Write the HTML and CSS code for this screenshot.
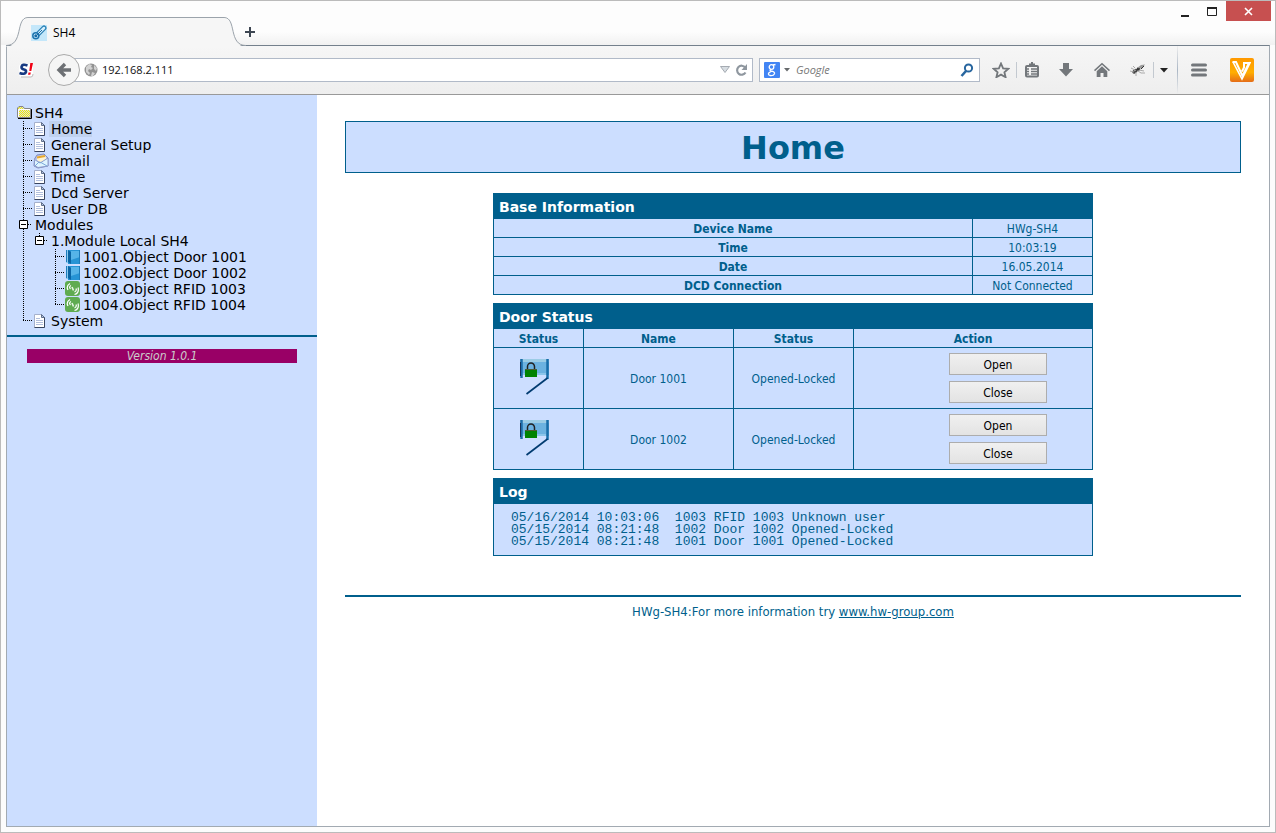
FILE: index.html
```html
<!DOCTYPE html>
<html lang="en">
<head>
<meta charset="utf-8">
<title>SH4</title>
<link rel="stylesheet" href="styles.css">
</head>
<body>
<svg class="sprites" width="0" height="0" aria-hidden="true">
  <defs><pattern id="dither" width="2" height="2" patternUnits="userSpaceOnUse"><path d="M0 0h2v2H0z" fill="#ddd"/><path d="M0 0h1v1H0zM1 1h1v1H1z" fill="#f0ec00"/></pattern></defs>
  <symbol id="tee" viewBox="0 0 16 16"><path d="M6.5 0V16M6 7.500H15" stroke="#000" stroke-dasharray="1 1" fill="none"/></symbol>
  <symbol id="end" viewBox="0 0 16 16"><path d="M6.500 0V8M6 7.500H15" stroke="#000" stroke-dasharray="1 1" fill="none"/></symbol>
  <symbol id="line" viewBox="0 0 16 16"><path d="M6.500 0V16" stroke="#000" stroke-dasharray="1 1" fill="none"/></symbol>
  <symbol id="minus" viewBox="0 0 16 16"><path d="M6.500 0V16M11 7.500H15" stroke="#000" stroke-dasharray="1 1" fill="none"/><path d="M2.500 3.500h8v8h-8z" fill="#fff" stroke="#000"/><path d="M4 7.500h5" stroke="#000"/></symbol>
  <symbol id="minus-end" viewBox="0 0 16 16"><path d="M6.500 0V4M11 7.500H15" stroke="#000" stroke-dasharray="1 1" fill="none"/><path d="M2.500 3.500h8v8h-8z" fill="#fff" stroke="#000"/><path d="M4 7.500h5" stroke="#000"/></symbol>
  <symbol id="folder" viewBox="0 0 16 16"><path d="M1 13.500h13.500V4" fill="none" stroke="#000"/><path d="M.5 12.500V3L2 1.500h4L7.500 3.500h6v9z" fill="url(#dither)" stroke="#85858b"/><path d="M1.500 12V4.500h11.500" fill="none" stroke="#fff"/></symbol>
  <symbol id="doc" viewBox="0 0 16 16"><path d="M1.500 1.500h7l3 3v10h-10z" fill="#fff" stroke="#a5b0cc"/><path d="M8.500 1.500v3h3z" fill="#b9c6e2" stroke="#60708c"/><path d="M11.500 4.500v10h-10" fill="none" stroke="#39455f"/><path d="M3 5.500h4M3 7.500h7M3 9.500h7M3 11.500h7" stroke="#b2bfdd"/></symbol>
  <symbol id="mail" viewBox="0 0 16 16"><path d="M1.500 6 4 2l7-1 4 4v8l-10 2-4-2z" fill="#b9c3ea" stroke="#8089b8"/><path d="M4 7V3.500L12 2l1.500 4.500L8 10z" fill="#fff4d0"/><path d="M4 4.500 12 3" stroke="#e6a72e" stroke-width="2"/><path d="M1.500 6.500 7 10l8-5v8L5 14.500l-3.500-2z" fill="#dff5ff" stroke="#8c9ccc"/><path d="M2 13l4-4 2 .5 6 3.500" fill="none" stroke="#78a7d8"/></symbol>
  <symbol id="door" viewBox="0 0 16 16"><path d="M1 1h3v13H1z" fill="#8cc9ee"/><path d="M3 1h12v14H3z" fill="#2694d5"/><path d="M3 1 6 3v12l-3-2z" fill="#0a65a5"/><path d="M6 2h9v6l-9 3z" fill="#56b4e8"/><path d="M1.500 1v12M14.500 1v14" stroke="#1d7dbb"/></symbol>
  <symbol id="rfid" viewBox="0 0 16 16"><rect width="15" height="15" rx="3" fill="#5fab50"/><path d="M3 9Q.8 5 5 2.500M5.500 8Q3.500 6 6 4.500M9.500 11q2.500-1 1.500-3.500M9.500 13.500Q14.500 12 13 6.500" fill="none" stroke="#fff" stroke-width="1.200"/><path d="m7 6 1.500 3.500" stroke="#e7f6e3" stroke-width="1.600"/></symbol>
  <symbol id="door-open" viewBox="0 0 32 38"><path d="M1 1h29v16H3z" fill="#6cb2e0"/><path d="M1 1h29v3H1z" fill="#9bcce5"/><path d="M3 15h24v2H3z" fill="#8bc5ea"/><path d="M2.500 1v19" stroke="#1c6da9" stroke-width="2.500"/><path d="M1.500 4v14" stroke="#17345a"/><path d="M28.500 1v20" stroke="#176ca9" stroke-width="2.500"/><path d="M28.500 20 7.500 36" stroke="#003b70" stroke-width="1.600"/><path d="M8.500 12V8.500a3.500 3.500 0 0 1 7 0V12" fill="none" stroke="#222" stroke-width="1.500"/><path d="M6 11.500h12V19H6z" fill="#008300"/><path d="M6 11.500h12" stroke="#4d5d35"/></symbol>
</svg>
<div class="window">
  <header class="titlebar">
    <div class="tab">
      <svg class="tab-edge" width="22" height="30" viewBox="0 0 22 30"><path d="M0 29.500C18 29.500 9 1.500 22 1.500V30H0z" fill="#f6f6f6"/><path d="M0 28.500C18 28.500 9 .5 22 .5" fill="none" stroke="#9ba3ab"/></svg>
      <div class="tab-body">
        <svg width="16" height="16" viewBox="0 0 16 16"><path d="M0 0h16v16H0z" fill="#c4e7fa"/><path d="m5 11 8-8" stroke="#287fb5" stroke-width="5" stroke-linecap="round"/><path d="m5 11 8-8" stroke="#d5effc" stroke-width="2.500" stroke-linecap="round"/><circle cx="4.800" cy="10.800" r="3" fill="#c4e7fa" stroke="#1d74ae" stroke-width="1.500"/><circle cx="4.800" cy="10.800" r="1.500" fill="#176aa5"/><path d="m5 11 6-6" stroke="#176aa5"/></svg>
        <span>SH4</span>
      </div>
      <svg class="tab-edge" width="22" height="30" viewBox="0 0 22 30"><path d="M22 29.500C4 29.500 13 1.500 0 1.500V30h22z" fill="#f6f6f6"/><path d="M22 28.500C4 28.500 13 .5 0 .5" fill="none" stroke="#9ba3ab"/></svg>
    </div>
    <button class="icon-button new-tab" aria-label="New tab"><svg width="12" height="12" viewBox="0 0 12 12"><path d="M6 1v10M1 6h10" stroke="#3d4652" stroke-width="2"/></svg></button>
    <div class="window-controls">
      <button class="icon-button control" aria-label="Minimize"><svg width="11" height="11" viewBox="0 0 11 11"><path d="M1 10h8" stroke="#222" stroke-width="2"/></svg></button>
      <button class="icon-button control" aria-label="Maximize"><svg width="11" height="11" viewBox="0 0 11 11"><path d="M.5 2v7.500h9V2" fill="none" stroke="#222"/><path d="M0 2h10" stroke="#222" stroke-width="2"/></svg></button>
      <button class="icon-button close" aria-label="Close"><svg width="9" height="9" viewBox="0 0 9 9"><path d="m1 1 7 7M8 1 1 8" stroke="#fff" stroke-width="1.600"/></svg></button>
    </div>
  </header>
  <div class="frame">
    <nav class="toolbar" aria-label="Browser">
      <button class="icon-button seznam" aria-label="Seznam"><svg width="16" height="16" viewBox="0 0 16 16"><rect x="1" y="2" width="14" height="13" rx="3" fill="#fff"/><path d="M3 15h10q2 0 2-3" fill="none" stroke="#bbb"/><path d="M9.500 3.500Q4 1.500 3.500 5q0 2 2.500 2.500t2 2.500Q7 13 1.500 11" fill="none" stroke="#173a82" stroke-width="2.600"/><path d="M12.300 1h2.700l-1.700 8h-2zM10.500 10.500h2.300l-.5 2.300H10z" fill="#f00014"/></svg></button>
      <button class="icon-button back" aria-label="Back"><svg width="16" height="16" viewBox="0 0 16 16"><path d="M15 8H4M9 2 3 8l6 6" fill="none" stroke="#6d7074" stroke-width="3.400"/></svg></button>
      <div class="field address">
        <svg width="14" height="14" viewBox="0 0 14 14"><circle cx="7" cy="7" r="6.500" fill="#929292"/><path d="m2 4 3-3 3 1-1 2 2 1-2 2-2-1-1 2 2 2-1 2-3-3zM10 2l3 3-1 3-2-2zM8 9l3 1-2 3H7z" fill="#d2d2d2"/></svg>
        <input class="text" aria-label="Address" value="192.168.2.111">
        <button class="icon-button mini" aria-label="History"><svg width="10" height="8" viewBox="0 0 10 8"><path d="M.5.5h9L5 6.500z" fill="#d7dde2" stroke="#a5abb2"/></svg></button>
        <button class="icon-button mini" aria-label="Reload"><svg width="14" height="13" viewBox="0 0 14 13"><path d="M10.500 8.500a4.500 4.500 0 1 1-.3-5" fill="none" stroke="#8f979f" stroke-width="2.200"/><path d="M12 0v6H6.500z" fill="#8f979f"/></svg></button>
      </div>
      <div class="field search">
        <svg width="16" height="16" viewBox="0 0 16 16"><rect width="16" height="16" rx="1" fill="#4285f4"/><circle cx="7.500" cy="5" r="2.300" fill="none" stroke="#fff" stroke-width="1.300"/><path d="M9 3l2.500-.5M7 7.300q-2 1.200 0 1.700 4 .5 3.500 2.700-1 2.300-4.500 1.800-2.500-.8-1-2.800L7 9.500" fill="none" stroke="#fff" stroke-width="1.300"/></svg>
        <svg class="engine-caret" width="6" height="4" viewBox="0 0 6 4"><path d="M0 0h6L3 3.500z" fill="#66696c"/></svg>
        <input class="text search-text" aria-label="Search" placeholder="Google">
        <button class="icon-button" aria-label="Go"><svg width="14" height="14" viewBox="0 0 14 14"><circle cx="8.500" cy="5" r="3.600" fill="none" stroke="#28669f" stroke-width="2"/><path d="m6 8-4.500 5" stroke="#28669f" stroke-width="2.600"/></svg></button>
      </div>
      <div class="tools">
        <button class="icon-button tool" aria-label="Bookmark"><svg width="18" height="16" viewBox="0 0 18 16"><path d="m9 1.500 2.100 4.800 5.200.5-3.900 3.400 1.200 5L9 12.600l-4.600 2.600 1.200-5-3.900-3.400 5.200-.5z" fill="none" stroke="#73777b" stroke-width="1.800"/></svg></button>
        <span class="divider"></span>
        <button class="icon-button tool list" aria-label="Bookmarks list"><svg width="16" height="16" viewBox="0 0 16 16"><rect x="2" y="4" width="12" height="10.500" rx="1" fill="none" stroke="#73777b" stroke-width="2"/><path d="M5 1.500h6v3H5zM7 0h2v2H7z" fill="#73777b"/><path d="M3 7h2M7 7h6M3 9.500h2M7 9.500h6M3 12h2M7 12h6" stroke="#73777b" stroke-width="1.300"/></svg></button>
        <button class="icon-button tool" aria-label="Downloads"><svg width="16" height="16" viewBox="0 0 16 16"><path d="M5 1h6v6h4l-7 7.500L1 7h4z" fill="#73777b"/></svg></button>
        <button class="icon-button tool wide" aria-label="Home page"><svg width="16" height="16" viewBox="0 0 16 16"><path d="M8 .8 16 8l-1 1.200-7-6.400-7 6.400L0 8z" fill="#73777b"/><path d="m8 4.300 5.300 4.900V15H9.500v-4h-3v4H2.700V9.200z" fill="#73777b"/></svg></button>
        <button class="icon-button tool" aria-label="Firebug"><svg width="16" height="14" viewBox="0 0 16 14"><path d="m4 9 2-1.500" stroke="#444" stroke-width="3.500" stroke-linecap="round"/><circle cx="8.500" cy="6" r="1.800" fill="#333"/><path d="m7 5 4-3 4-.500-3 4z" fill="#999"/><path d="m11 6 3-3" stroke="#333"/><path d="M1 5l4 2M0 8l4 1M6 9v4M8 8l3 2 4 0M9 7l5 1M5 5 3 3" fill="none" stroke="#aaa"/><path d="m4 8 2-1" stroke="#aaa"/></svg></button>
        <span class="divider"></span>
        <button class="icon-button caret" aria-label="More"><svg width="8" height="5" viewBox="0 0 8 5"><path d="M0 0h8L4 4.500z" fill="#222"/></svg></button>
        <span class="divider tall"></span>
        <button class="icon-button menu" aria-label="Menu"><svg width="16" height="14" viewBox="0 0 16 14"><path d="M1.500 2h13M1.500 7h13M1.500 12h13" stroke="#73777b" stroke-width="3" stroke-linecap="round"/></svg></button>
        <button class="icon-button" aria-label="Freemake"><svg width="24" height="24" viewBox="0 0 24 24"><defs><linearGradient id="orange" x2="0" y2="1"><stop stop-color="#f90"/><stop offset=".6" stop-color="#ffae00"/><stop offset="1" stop-color="#e56d18"/></linearGradient></defs><rect width="24" height="24" rx="2" fill="url(#orange)"/><path d="M2.500 4H6l6.500 14L19 5h-5v4.500l-2 4" fill="none" stroke="#fff" stroke-width="2"/><path d="M3 4l9 17 8.500-17" fill="none" stroke="#fff" stroke-width="1.600"/></svg></button>
      </div>
    </nav>
    <div class="page">
      <aside class="sidebar">
        <ul class="tree">
          <li class="node"><svg class="cell"><use href="#folder"/></svg><a class="label" href="#">SH4</a></li>
          <li class="node"><svg class="cell"><use href="#tee"/></svg><svg class="cell"><use href="#doc"/></svg><a class="label selected" href="#">Home</a></li>
          <li class="node"><svg class="cell"><use href="#tee"/></svg><svg class="cell"><use href="#doc"/></svg><a class="label" href="#">General Setup</a></li>
          <li class="node"><svg class="cell"><use href="#tee"/></svg><svg class="cell"><use href="#mail"/></svg><a class="label" href="#">Email</a></li>
          <li class="node"><svg class="cell"><use href="#tee"/></svg><svg class="cell"><use href="#doc"/></svg><a class="label" href="#">Time</a></li>
          <li class="node"><svg class="cell"><use href="#tee"/></svg><svg class="cell"><use href="#doc"/></svg><a class="label" href="#">Dcd Server</a></li>
          <li class="node"><svg class="cell"><use href="#tee"/></svg><svg class="cell"><use href="#doc"/></svg><a class="label" href="#">User DB</a></li>
          <li class="node"><button class="icon-button" aria-label="Collapse Modules"><svg class="cell"><use href="#minus"/></svg></button><a class="label" href="#">Modules</a></li>
          <li class="node"><svg class="cell"><use href="#line"/></svg><button class="icon-button" aria-label="Collapse Module Local SH4"><svg class="cell"><use href="#minus-end"/></svg></button><a class="label" href="#">1.Module Local SH4</a></li>
          <li class="node"><svg class="cell"><use href="#line"/></svg><span class="cell"></span><svg class="cell"><use href="#tee"/></svg><svg class="cell"><use href="#door"/></svg><a class="label" href="#">1001.Object Door 1001</a></li>
          <li class="node"><svg class="cell"><use href="#line"/></svg><span class="cell"></span><svg class="cell"><use href="#tee"/></svg><svg class="cell"><use href="#door"/></svg><a class="label" href="#">1002.Object Door 1002</a></li>
          <li class="node"><svg class="cell"><use href="#line"/></svg><span class="cell"></span><svg class="cell"><use href="#tee"/></svg><svg class="cell"><use href="#rfid"/></svg><a class="label" href="#">1003.Object RFID 1003</a></li>
          <li class="node"><svg class="cell"><use href="#line"/></svg><span class="cell"></span><svg class="cell"><use href="#end"/></svg><svg class="cell"><use href="#rfid"/></svg><a class="label" href="#">1004.Object RFID 1004</a></li>
          <li class="node"><svg class="cell"><use href="#end"/></svg><svg class="cell"><use href="#doc"/></svg><a class="label" href="#">System</a></li>
        </ul>
        <p class="version">Version 1.0.1</p>
      </aside>
      <main class="main">
        <h1 class="title">Home</h1>
        <div class="panels">
          <table class="panel">
            <colgroup><col><col class="value-col"></colgroup>
            <thead><tr><th class="panel-title" colspan="2">Base Information</th></tr></thead>
            <tbody>
              <tr><th>Device Name</th><td>HWg-SH4</td></tr>
              <tr><th>Time</th><td>10:03:19</td></tr>
              <tr><th>Date</th><td>16.05.2014</td></tr>
              <tr><th>DCD Connection</th><td>Not Connected</td></tr>
            </tbody>
          </table>
          <table class="panel">
            <colgroup><col class="icon-col"><col class="name-col"><col class="value-col"><col></colgroup>
            <thead>
              <tr><th class="panel-title" colspan="4">Door Status</th></tr>
              <tr><th>Status</th><th>Name</th><th>Status</th><th>Action</th></tr>
            </thead>
            <tbody>
              <tr><td><svg class="door" width="32" height="38"><use href="#door-open"/></svg></td><td>Door 1001</td><td>Opened-Locked</td><td><div class="actions"><button class="action">Open</button><button class="action">Close</button></div></td></tr>
              <tr><td><svg class="door" width="32" height="38"><use href="#door-open"/></svg></td><td>Door 1002</td><td>Opened-Locked</td><td><div class="actions"><button class="action">Open</button><button class="action">Close</button></div></td></tr>
            </tbody>
          </table>
          <table class="panel">
            <thead><tr><th class="panel-title">Log</th></tr></thead>
            <tbody><tr><td><pre class="log">05/16/2014 10:03:06  1003 RFID 1003 Unknown user
05/15/2014 08:21:48  1002 Door 1002 Opened-Locked
05/15/2014 08:21:48  1001 Door 1001 Opened-Locked</pre></td></tr></tbody>
          </table>
        </div>
        <footer class="footer">HWg-SH4:For more information try <a class="site" href="#">www.hw-group.com</a></footer>
      </main>
    </div>
  </div>
</div>
</body>
</html>
```
FILE: styles.css
```css
:root {
  --ink: #005f8c;
  --pale: #ccdeff;
  --edge: #a2aab2;
  --chrome-font: "Open Sans", "Noto Sans", sans-serif;
  --page-font: "DejaVu Sans Condensed", "DejaVu Sans", sans-serif;
  --wide-font: "DejaVu Sans", sans-serif;
}
* { box-sizing: border-box; }
body { margin: 0; font-family: var(--page-font); font-size: 12px; }
svg { display: block; flex: none; }
.sprites { position: absolute; }
.window {
  min-height: 100vh;
  display: flex;
  flex-direction: column;
  border: 1px solid #bbb;
  background: #fcfcfc;
}
.icon-button {
  display: flex;
  align-items: center;
  justify-content: center;
  flex: none;
  margin: 0;
  padding: 0;
  border: 0;
  background: none;
}

.titlebar {
  display: flex;
  align-items: flex-end;
  height: 44px;
  padding: 0 4px 0 5px;
  background: linear-gradient(#fdfdfd 70%, #f1f1f1);
  font-family: var(--chrome-font);
}
.tab { display: flex; position: relative; margin-bottom: -2px; }
.tab-body {
  display: flex;
  align-items: center;
  gap: 6px;
  width: 196px;
  height: 30px;
  padding-left: 3px;
  border-top: 1px solid #9ba3ab;
  background: #f6f6f6;
}
.new-tab { position: relative; width: 12px; height: 26px; margin-left: -2px; }
.window-controls { display: flex; align-items: flex-start; align-self: flex-start; margin-left: auto; }
.control { width: 27px; height: 20px; }
.close { width: 45px; height: 20px; background: #c75050; }

.frame {
  flex: 1;
  display: flex;
  flex-direction: column;
  margin: 0 5px 5px;
  border: 1px solid var(--edge);
  border-top-color: #74808c;
}
.toolbar {
  display: flex;
  align-items: center;
  height: 49px;
  padding: 0 15px 0 11px;
  border-bottom: 1px solid #999;
  background: linear-gradient(#f6f6f6, #eee);
  font-family: var(--chrome-font);
}
.seznam { width: 16px; height: 16px; }
.back {
  position: relative;
  width: 32px;
  height: 32px;
  margin-left: 14px;
  border: 1px solid #aaa;
  border-radius: 50%;
  background: #f5f5f5;
}
.field {
  display: flex;
  align-items: center;
  height: 24px;
  border: 1px solid #b1bac8;
  background: #fff;
}
.address { flex: 1; margin-left: -6px; padding: 0 3px 0 9px; }
.search { width: 221px; margin-left: 6px; padding: 0 5px 0 4px; }
.text {
  flex: 1;
  min-width: 0;
  margin: 0;
  padding: 0 0 0 4px;
  border: 0;
  background: none;
  color: #111;
  font: 11px/16px var(--chrome-font);
}
.search-text { padding-left: 6px; }
.search-text::placeholder { color: #777; font-style: italic; }
.mini { margin-left: 5px; }
.engine-caret { margin-left: 4px; }
.tools { display: flex; align-items: center; margin-left: 6px; }
.tool { width: 30px; height: 24px; }
.list { margin-right: 4px; }
.wide { width: 42px; }
.divider { width: 1px; height: 16px; background: #c3c9d0; }
.tall { height: 48px; background: linear-gradient(#eee, #aab6c4, #eee); }
.caret { width: 20px; height: 24px; margin-right: 3px; }
.menu { width: 42px; height: 24px; margin-right: 10px; }

.page { flex: 1; display: flex; background: #fff; }
.sidebar { flex: none; width: 310px; background: var(--pale); }
.tree {
  margin: 0;
  padding: 10px 10px 6px;
  border-bottom: 2px solid var(--ink);
  list-style: none;
  font-family: var(--wide-font);
  font-size: 14px;
  line-height: 16px;
}
.node { display: flex; height: 16px; }
.cell { flex: none; width: 16px; height: 16px; }
.label { padding: 0 0 0 2px; color: #000; text-decoration: none; white-space: nowrap; }
.selected { background: #c0d2ef; }
.version {
  margin: 12px 20px 0;
  background: #906;
  color: #ccc;
  font-style: italic;
  line-height: 14px;
  text-align: center;
}

.main { flex: 1; min-width: 0; padding: 26px 28px; color: var(--ink); }
.title {
  margin: 0;
  padding-top: 2px;
  border: 1px solid var(--ink);
  background: var(--pale);
  font-family: var(--wide-font);
  font-size: 32px;
  line-height: 48px;
  text-align: center;
}
.panels {
  display: flex;
  flex-direction: column;
  gap: 8px;
  max-width: 600px;
  margin: 20px auto 39px;
}
.panel {
  width: 100%;
  table-layout: fixed;
  border-collapse: collapse;
  background: var(--pale);
  line-height: 16px;
  text-align: center;
}
.panel th, .panel td { padding: 2px 0 0; border: 1px solid var(--ink); }
.panel .panel-title {
  padding: 2px 5px 0;
  background: var(--ink);
  color: #fff;
  font-family: var(--wide-font);
  font-size: 14px;
  line-height: 22px;
  text-align: left;
}
.icon-col { width: 90px; }
.name-col { width: 150px; }
.value-col { width: 120px; }
.door { margin: 0 auto 4px 25px; }
.actions {
  display: flex;
  flex-direction: column;
  align-items: center;
  gap: 6px;
  padding: 3px 0 5px 50px;
}
.action {
  width: 98px;
  height: 22px;
  padding: 2px 0 0;
  border: 1px solid #adadad;
  background: linear-gradient(#f0f0f0, #e3e3e3);
  color: #000;
  font: 12px/18px var(--page-font);
}
.log {
  margin: 0;
  padding: 6px 17px 7px;
  font: 13px/12px "Liberation Mono", monospace;
  text-align: left;
}
.footer {
  padding-top: 6px;
  border-top: 2px solid var(--ink);
  font-size: 13px;
  line-height: 18px;
  text-align: center;
}
.site { color: inherit; }
```
